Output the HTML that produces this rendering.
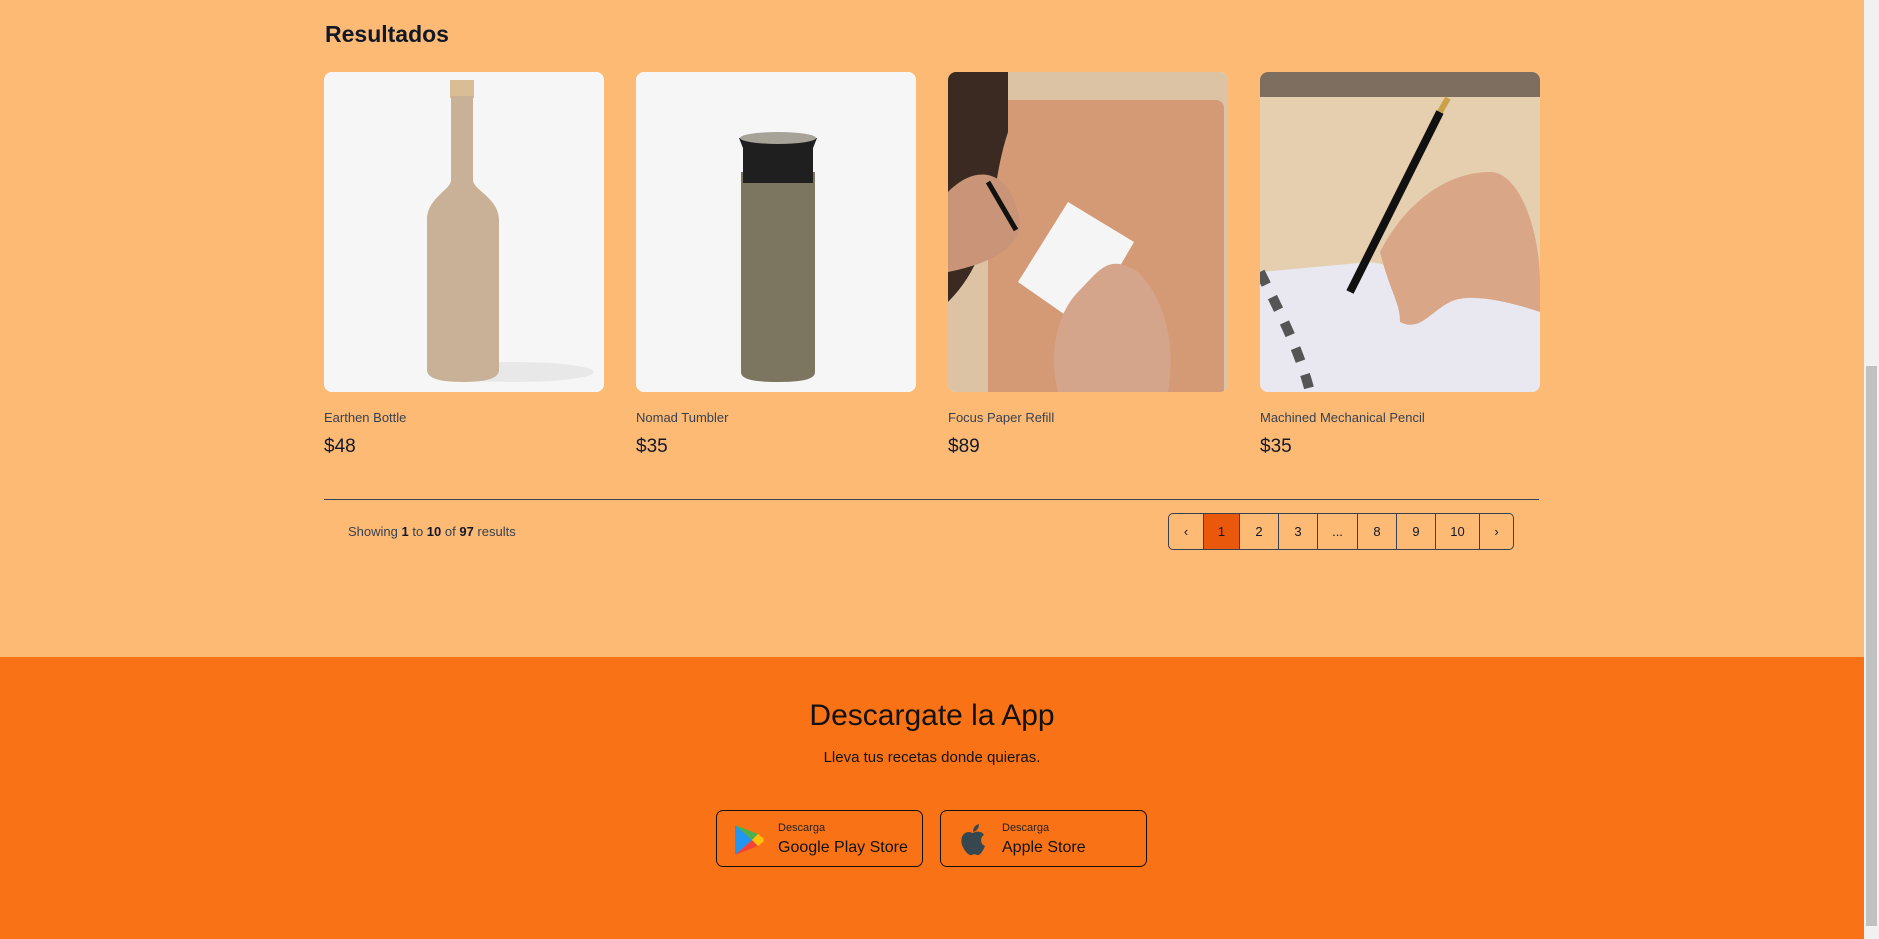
<!DOCTYPE html>
<html><head><meta charset="utf-8"><style>
*{box-sizing:border-box;margin:0;padding:0}
body{width:1879px;height:939px;overflow:hidden;background:#fdba74;font-family:"Liberation Sans",sans-serif;position:relative;color:#111827}
h2{position:absolute;left:325px;top:21px;font-size:23px;font-weight:bold;color:#111827}
.card{position:absolute;top:72px;width:280px}
.img{width:280px;height:320px;border-radius:8px;overflow:hidden;background:#f6f6f6}
.img svg{display:block}
.name{position:absolute;top:338px;font-size:13px;color:#374151;white-space:nowrap}
.price{position:absolute;top:364px;font-size:19px;color:#111827}
.line{position:absolute;left:324px;top:499px;width:1215px;height:1px;background:#374151}
.show{position:absolute;left:348px;top:524px;font-size:13px;color:#374151}
.show b{color:#111827;font-weight:bold}
.pag{position:absolute;left:1168px;top:513px;height:37px;display:flex;border:1px solid #374151;border-radius:5px;overflow:hidden}
.pag div{height:35px;border-left:1px solid #374151;display:flex;align-items:center;justify-content:center;font-size:13px;color:#111827}
.pag div:first-child{border-left:none}
.pag .a{background:#ea580c}
footer{position:absolute;left:0;top:657px;width:1864px;height:282px;background:#f97316;text-align:center}
footer h3{position:absolute;top:42px;width:100%;font-size:30px;font-weight:normal;color:#111}
footer p{position:absolute;top:92px;width:100%;font-size:15px;color:#111}
.btn{position:absolute;top:153px;width:207px;height:57px;border:1px solid #111;border-radius:7px;text-align:left}
.btn .s{position:absolute;left:61px;top:11px;font-size:11px;color:#222}
.btn .l{position:absolute;left:61px;top:28px;font-size:16px;color:#111}
.btn svg{position:absolute;left:17px;top:12px}
.sb{position:absolute;right:0;top:0;width:15px;height:939px;background:#f1f1f1}
.sb .t{position:absolute;left:2px;top:366px;width:11px;height:560px;background:#c1c1c1}
</style></head><body>
<h2>Resultados</h2>

<div class="card" style="left:324px"><div class="img"><svg width="280" height="320" viewBox="0 0 280 320">
<rect width="280" height="320" fill="#f6f6f6"/>
<ellipse cx="190" cy="300" rx="80" ry="10" fill="#e8e8e8"/>
<rect x="126" y="8" width="24" height="18" fill="#d9bd94"/>
<path d="M127 24h22v84c0 10 26 18 26 40v150c0 8-12 12-36 12s-36-4-36-12V148c0-22 24-30 24-40z" fill="#c8b196"/>
</svg></div><div class="name">Earthen Bottle</div><div class="price">$48</div></div>

<div class="card" style="left:636px"><div class="img"><svg width="280" height="320" viewBox="0 0 280 320">
<rect width="280" height="320" fill="#f6f6f6"/>
<path d="M105 100h74v200c0 6-8 10-37 10s-37-4-37-10z" fill="#7c7560"/>
<path d="M103 66h78l-4 10v35h-70V76z" fill="#1f1f1f"/>
<ellipse cx="142" cy="66" rx="38" ry="6" fill="#a8a398"/>
</svg></div><div class="name">Nomad Tumbler</div><div class="price">$35</div></div>

<div class="card" style="left:948px"><div class="img"><svg width="280" height="320" viewBox="0 0 280 320">
<rect width="280" height="320" fill="#dcc3a4"/>
<rect x="40" y="28" width="236" height="300" rx="8" fill="#d49a76"/>
<path d="M0 0h60v60c-20 60 -10 120 -60 170z" fill="#3a2a22"/>
<path d="M0 120c30-30 60-20 70 20 10 30 -20 50 -70 60z" fill="#c99478"/>
<path d="M70 210l50-80 66 40-50 86z" fill="#f5f5f5"/>
<path d="M110 320c-10-40 0-80 20-100 20-20 30-40 60-20 20 20 40 60 30 120z" fill="#d5a58b"/>
<path d="M40 110l28 48" stroke="#111" stroke-width="5"/>
</svg></div><div class="name">Focus Paper Refill</div><div class="price">$89</div></div>

<div class="card" style="left:1260px"><div class="img"><svg width="280" height="320" viewBox="0 0 280 320">
<rect width="280" height="320" fill="#e6cfae"/>
<rect width="280" height="25" fill="#7e6e5f"/>
<path d="M0 200l110-10 170 30v100H0z" fill="#e9e8f0"/>
<path d="M0 200c20 40 40 80 50 120" stroke="#555" stroke-width="10" fill="none" stroke-dasharray="14 14"/>
<path d="M90 220l90-180" stroke="#111" stroke-width="8"/>
<path d="M180 40l8-14" stroke="#c9a24a" stroke-width="6"/>
<path d="M120 180c20-40 60-80 110-80 30 0 50 60 50 110v30c-30-10-70-20-90-10-20 10-30 30-50 20 0-20 -10-30 -20-70z" fill="#d9a688"/>
</svg></div><div class="name">Machined Mechanical Pencil</div><div class="price">$35</div></div>

<div class="line"></div>
<div class="show">Showing <b>1</b> to <b>10</b> of <b>97</b> results</div>
<div class="pag">
<div style="width:34px">&#8249;</div><div class="a" style="width:36px">1</div><div style="width:39px">2</div><div style="width:39px">3</div><div style="width:40px">...</div><div style="width:39px">8</div><div style="width:39px">9</div><div style="width:44px">10</div><div style="width:34px">&#8250;</div>
</div>

<footer>
<h3>Descargate la App</h3>
<p>Lleva tus recetas donde quieras.</p>
<div class="btn" style="left:716px"><svg width="30" height="34" viewBox="0 0 30 32"><path d="M1 1l17 15L1 31z" fill="#2196f3"/><path d="M1 1l17 15 6-6z" fill="#4caf50"/><path d="M1 31l17-15 6 6z" fill="#f44336"/><path d="M18 16l6-6 5 4c1 1 1 3 0 4l-5 4z" fill="#ffc107"/></svg><div class="s">Descarga</div><div class="l">Google Play Store</div></div>
<div class="btn" style="left:940px"><svg width="30" height="34" viewBox="0 0 30 34"><path d="M15 10c3-2 9-2 11 2-4 2-4 9 1 11-2 5-5 10-8 9-2-1-3-1-5 0-4 1-8-5-10-10-2-7 1-13 7-13 2 0 3 1 4 1z" fill="#37474f"/><path d="M15 9c0-4 2-7 6-8 0 4-2 7-6 8z" fill="#37474f"/></svg><div class="s">Descarga</div><div class="l">Apple Store</div></div>
</footer>
<div class="sb"><div class="t"></div></div>
</body></html>
